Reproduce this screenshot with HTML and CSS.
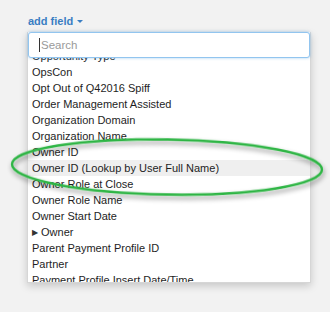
FILE: index.html
```html
<!DOCTYPE html>
<html lang="en">
<head>
    <meta charset="UTF-8">
    <title>Add field</title>
    <link rel="stylesheet" href="styles.css">
</head>
<body>

<div class="picker">
    <a class="add-field">add field <span class="caret"></span></a>

    <div class="dropdown">
        <div class="search-box">
            <span class="cursor"></span>
            <span class="placeholder">Search</span>
        </div>
        <div class="options">
            <ul>
                <li>Opportunity Type</li>
                <li>OpsCon</li>
                <li>Opt Out of Q42016 Spiff</li>
                <li>Order Management Assisted</li>
                <li>Organization Domain</li>
                <li>Organization Name</li>
                <li>Owner ID</li>
                <li class="active">Owner ID (Lookup by User Full Name)</li>
                <li>Owner Role at Close</li>
                <li>Owner Role Name</li>
                <li>Owner Start Date</li>
                <li><span class="expander">&#9654;</span> Owner</li>
                <li>Parent Payment Profile ID</li>
                <li>Partner</li>
                <li>Payment Profile Insert Date/Time</li>
            </ul>
        </div>
    </div>
</div>

<svg class="annotation" width="330" height="312" viewBox="0 0 330 312">
    <defs>
        <filter id="shade" x="-10%" y="-50%" width="120%" height="200%">
            <feDropShadow dx="1" dy="3" stdDeviation="2.5" flood-color="#000" flood-opacity="0.45"/>
        </filter>
    </defs>
    <ellipse cx="167" cy="167" rx="155" ry="27.5" transform="rotate(1 167 167)"
             fill="none" stroke="#2fb545" stroke-width="2.4" filter="url(#shade)"/>
</svg>

</body>
</html>
```

FILE: styles.css
```css
body {
    margin: 0;
    background: #f2f2f2;
    font-family: "Liberation Sans", Arial, sans-serif;
    width: 330px;
    height: 312px;
    overflow: hidden;
    position: relative;
}

.picker {
    padding: 14px 0 0 27px;
}

.add-field {
    display: flex;
    width: max-content;
    align-items: center;
    gap: 4px;
    margin-left: 1px;
    color: #3a7ec3;
    font-size: 11px;
    font-weight: bold;
    line-height: 14px;
    cursor: pointer;
}

.caret {
    width: 0;
    height: 0;
    border-left: 3px solid transparent;
    border-right: 3px solid transparent;
    border-top: 3px solid #3a7ec3;
    margin-top: 1px;
}

.dropdown {
    margin-top: 4px;
    width: 282px;
    background: white;
    border: 1px solid #d6d6d6;
    border-top: none;
    box-shadow: 0px 3px 8px rgba(0, 0, 0, 0.18);
}

.search-box {
    height: 24px;
    border: 1px solid #92c5ef;
    border-radius: 3px;
    box-shadow: 0 0 3px rgba(90, 165, 230, 0.55);
    background: white;
    display: flex;
    align-items: center;
    padding-left: 10px;
    position: relative;
    z-index: 1;
}

.cursor {
    width: 1px;
    height: 14px;
    background: #333;
    margin-right: 1px;
}

.placeholder {
    color: #9a9a9a;
    font-size: 11.5px;
}

.options {
    height: 224px;
    overflow: hidden;
}

.options ul {
    list-style: none;
    margin: -10px 0 0 0;
    padding: 0;
}

.options li {
    height: 16px;
    line-height: 16px;
    padding-left: 4px;
    font-size: 11px;
    color: #1e1e1e;
    white-space: nowrap;
}

.options li.active {
    background: #efefef;
}

.expander {
    font-size: 8px;
    color: #333;
    vertical-align: 1px;
}

.annotation {
    position: absolute;
    left: 0;
    top: 0;
    pointer-events: none;
}
```
